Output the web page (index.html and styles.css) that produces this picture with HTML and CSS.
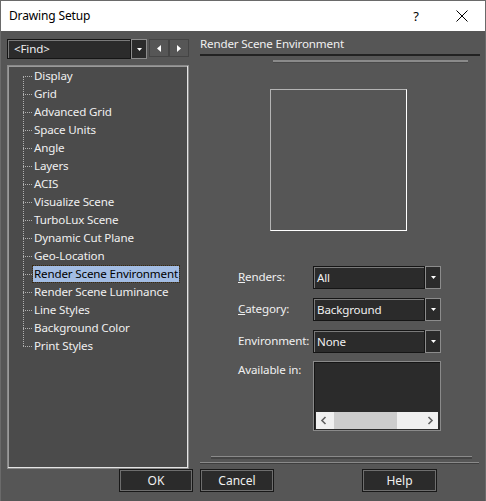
FILE: index.html
```html
<!DOCTYPE html>
<html lang="en">
<head>
    <meta charset="UTF-8">
    <title>Drawing Setup</title>
    <link rel="stylesheet" href="styles.css">
</head>
<body>
    <div class="window">
        <div class="titlebar">
            <span class="title">Drawing Setup</span>
            <span class="help">?</span>
            <span class="close">
                <svg width="12" height="12" viewBox="0 0 12 12"><path d="M0.5 0.5L11.5 11.5M11.5 0.5L0.5 11.5" stroke="#000" stroke-width="1"/></svg>
            </span>
        </div>

        <div class="main">
            <div class="left">
                <div class="find-row">
                    <div class="combo find">
                        <span class="combo-text">&lt;Find&gt;</span>
                        <span class="combo-btn"><svg width="5" height="3" viewBox="0 0 5 3"><path d="M0 0H5L2.5 3Z" fill="#fff"/></svg></span>
                    </div>
                    <div class="nav-btn"><svg width="4" height="7" viewBox="0 0 4 7"><path d="M4 0V7L0 3.5Z" fill="#fff"/></svg></div>
                    <div class="nav-btn"><svg width="4" height="7" viewBox="0 0 4 7"><path d="M0 0V7L4 3.5Z" fill="#fff"/></svg></div>
                </div>
                <div class="tree">
                    <ul class="tree-list">
                        <li><span>Display</span></li>
                        <li><span>Grid</span></li>
                        <li><span>Advanced Grid</span></li>
                        <li><span>Space Units</span></li>
                        <li><span>Angle</span></li>
                        <li><span>Layers</span></li>
                        <li><span>ACIS</span></li>
                        <li><span>Visualize Scene</span></li>
                        <li><span>TurboLux Scene</span></li>
                        <li><span>Dynamic Cut Plane</span></li>
                        <li><span>Geo-Location</span></li>
                        <li class="selected"><span>Render Scene Environment</span></li>
                        <li><span>Render Scene Luminance</span></li>
                        <li><span>Line Styles</span></li>
                        <li><span>Background Color</span></li>
                        <li><span>Print Styles</span></li>
                    </ul>
                </div>
            </div>

            <div class="right">
                <div class="page-title">Render Scene Environment</div>
                <div class="rule"></div>
                <div class="preview"></div>

                <div class="form">
                    <div class="form-row">
                        <label><u>R</u>enders:</label>
                        <div class="combo">
                            <span class="combo-text">All</span>
                            <span class="combo-btn"><svg width="5" height="3" viewBox="0 0 5 3"><path d="M0 0H5L2.5 3Z" fill="#fff"/></svg></span>
                        </div>
                    </div>
                    <div class="form-row">
                        <label><u>C</u>ategory:</label>
                        <div class="combo">
                            <span class="combo-text">Background</span>
                            <span class="combo-btn"><svg width="5" height="3" viewBox="0 0 5 3"><path d="M0 0H5L2.5 3Z" fill="#fff"/></svg></span>
                        </div>
                    </div>
                    <div class="form-row">
                        <label>Environment:</label>
                        <div class="combo">
                            <span class="combo-text">None</span>
                            <span class="combo-btn"><svg width="5" height="3" viewBox="0 0 5 3"><path d="M0 0H5L2.5 3Z" fill="#fff"/></svg></span>
                        </div>
                    </div>
                    <div class="form-row list-row">
                        <label>Available in:</label>
                        <div class="listbox">
                            <div class="list-area"></div>
                            <div class="hscroll">
                                <svg width="7" height="9" viewBox="0 0 7 9"><path d="M5.5 1L2 4.5L5.5 8" fill="none" stroke="#606060" stroke-width="1.6"/></svg>
                                <div class="track"><div class="thumb"></div></div>
                                <svg width="7" height="9" viewBox="0 0 7 9"><path d="M1.5 1L5 4.5L1.5 8" fill="none" stroke="#606060" stroke-width="1.6"/></svg>
                            </div>
                        </div>
                    </div>
                </div>

                <div class="sep sep-short"></div>
                <div class="sep sep-long"></div>
            </div>
        </div>

        <div class="buttons">
            <button class="btn">OK</button>
            <button class="btn">Cancel</button>
            <button class="btn help-btn">Help</button>
        </div>
    </div>
</body>
</html>
```

FILE: styles.css
```css
body {
    margin: 0;
    background: #3a3a3a;
    font-family: "Noto Sans", "Open Sans", sans-serif;
    font-size: 11.6px;
    letter-spacing: -0.15px;
}

.window {
    width: 484px;
    height: 500px;
    background: #565656;
    border-top: 1px solid #6a6a6a;
    border-left: 1px solid #6a6a6a;
    border-right: 1px solid #6a6a6a;
    color: #f0f0f0;
    display: flex;
    flex-direction: column;
}

/* title bar */
.titlebar {
    height: 30px;
    background: #fff;
    color: #000;
    display: flex;
    align-items: center;
    padding-left: 8px;
}

.title {
    flex: 1;
    font-size: 12px;
    margin-top: -1px;
}

.help {
    width: 46px;
    text-align: center;
    font-size: 13px;
}

.close {
    width: 46px;
    display: flex;
    justify-content: center;
}

/* main area */
.main {
    display: flex;
    padding: 8px 0 0 6px;
}

.left {
    width: 182px;
    display: flex;
    flex-direction: column;
}

.find-row {
    display: flex;
    height: 20px;
}

.combo {
    display: flex;
    height: 23px;
}

.combo-text {
    flex: 1;
    background: #2b2b2b;
    border: 1px solid #151515;
    box-shadow: inset 1px 1px 0 #7a7a7a;
    padding-left: 3px;
    line-height: 22px;
    white-space: nowrap;
}

.combo-btn {
    width: 14px;
    background: #2b2b2b;
    border: 1px solid #8c8c8c;
    display: flex;
    align-items: center;
    justify-content: center;
}

.find {
    width: 140px;
    height: 20px;
}

.find .combo-text {
    line-height: 18px;
    padding-left: 6px;
}

.nav-btn {
    width: 18px;
    height: 16px;
    margin-left: 2px;
    border: 1px solid #444;
    display: flex;
    align-items: center;
    justify-content: center;
}

.nav-btn + .nav-btn {
    margin-left: 0;
}

.tree {
    margin-top: 6px;
    height: 402px;
    background: #4b4b4b;
    border: 1px solid #8a8a8a;
    box-shadow: inset -1px -1px 0 #e4e4e4, inset 1px 1px 0 #9a9a9a;
}

.tree-list {
    list-style: none;
    margin: 1px 0 0 0;
    padding: 0 0 0 25px;
    position: relative;
}

.tree-list::before {
    content: "";
    position: absolute;
    left: 15px;
    top: 9px;
    bottom: 9px;
    border-left: 1px dotted #b0b0b0;
}

.tree-list li {
    height: 18px;
    line-height: 18px;
    position: relative;
    white-space: nowrap;
}

.tree-list li::before {
    content: "";
    position: absolute;
    left: -10px;
    top: 9px;
    width: 9px;
    border-top: 1px dotted #b0b0b0;
}

.tree-list li span {
    padding: 0 1px;
    display: inline-block;
    line-height: 16px;
}

.tree-list li.selected span {
    background: #a3bde4;
    color: #000;
    outline: 1px dotted #3a2a10;
}

/* right panel */
.right {
    width: 280px;
    margin-left: 11px;
    display: flex;
    flex-direction: column;
}

.page-title {
    margin-top: -2px;
    height: 17px;
    line-height: 14px;
    border-bottom: 2px solid #222;
}

.rule {
    margin: 4px 0 0 73px;
    width: 195px;
    height: 2px;
    background: #8a8a8a;
    border-bottom: 1px solid #4a4a4a;
}

.preview {
    margin: 26px 0 0 70px;
    width: 135px;
    height: 140px;
    border: 1px solid #fff;
    border-top-color: #b4b4b4;
    border-left-color: #b4b4b4;
}

.form {
    margin-top: 35px;
    display: flex;
    flex-direction: column;
    gap: 9px;
}

.form-row {
    display: flex;
    align-items: flex-start;
}

.form-row label {
    width: 75px;
    padding-left: 38px;
    padding-top: 2px;
    line-height: 18px;
    white-space: nowrap;
}

.form-row .combo {
    width: 128px;
}

.list-row {
    margin-top: -1px;
}

.list-row label {
    padding-top: 0;
}

.listbox {
    box-sizing: border-box;
    width: 128px;
    height: 70px;
    border: 1px solid #8a8a8a;
    background: #2b2b2b;
    box-shadow: inset 1px 1px 0 #151515;
    display: flex;
    flex-direction: column;
    padding: 2px 2px 1px 2px;
}

.list-area {
    flex: 1;
}

.hscroll {
    height: 17px;
    background: #f0f0f0;
    display: flex;
    align-items: center;
    padding: 0 4px;
}

.track {
    flex: 1;
    height: 100%;
    padding: 0 30px 0 7px;
}

.thumb {
    height: 100%;
    background: #cdcdcd;
}

.sep {
    height: 1px;
    background: #8a8a8a;
}

.sep-short {
    margin: 25px 0 0 11px;
    width: 261px;
    border-bottom: 2px solid #444;
}

.sep-long {
    margin-top: 3px;
    width: 279px;
    border-bottom: 1px solid #3e3e3e;
}

/* bottom buttons */
.buttons {
    display: flex;
    padding-left: 118px;
    margin-top: 0;
    gap: 7px;
}

.btn {
    width: 74px;
    height: 23px;
    background: #2b2b2b;
    color: #f0f0f0;
    border: 1px solid #181818;
    box-shadow: inset 0 0 0 1px #6e6e6e;
    font-family: "Noto Sans", "Open Sans", sans-serif;
    font-size: 12px;
    padding: 0;
}

.help-btn {
    margin-left: 81px;
    width: 75px;
}
```
